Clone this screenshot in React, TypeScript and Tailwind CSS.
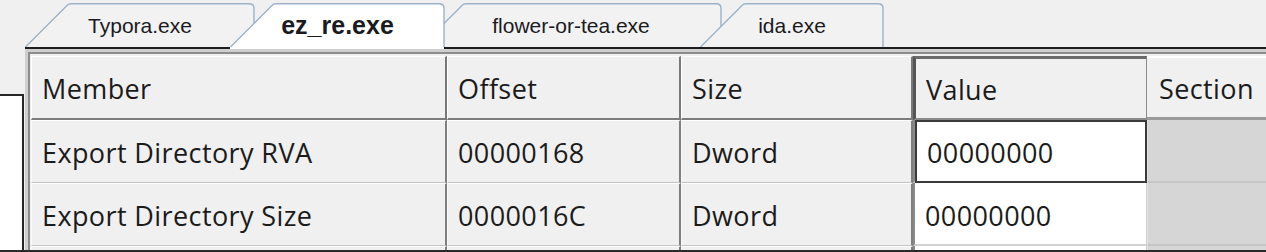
import React from "react";

type Tab = { name: string; w: number; active?: boolean; cls: string };

const TABS: Tab[] = [
  { name: "Typora.exe", w: 230, cls: "z-[1]" },
  { name: "ez_re.exe", w: 215, active: true, cls: "z-10 -ml-[25px]" },
  { name: "flower-or-tea.exe", w: 302, cls: "z-[2] -ml-[25px]" },
  { name: "ida.exe", w: 184, cls: "z-[3] -ml-[22px]" },
];

const COLS = ["Member", "Offset", "Size", "Value", "Section"];

const ROWS = [
  ["Export Directory RVA", "00000168", "Dword", "00000000"],
  ["Export Directory Size", "0000016C", "Dword", "00000000"],
  ["", "", "", ""],
];

function TabShape({ w, active }: { w: number; active?: boolean }) {
  const h = active ? 46 : 44;
  // slanted left edge, rounded top corners
  const d = `M0.5 44 L42 2.5 Q43.5 0.8 46 0.8 H${w - 6} Q${w - 1} 0.8 ${w - 1} 5 V44`;
  return (
    <svg width={w} height={h} className="absolute left-0 top-0" aria-hidden>
      <path d={`${d} Z`} fill={active ? "#ffffff" : "#f2f2f2"} stroke="none" />
      {active && <rect x="0" y="43" width={w - 1} height="3" fill="#ffffff" />}
      <path d={d} fill="none" stroke="#9db2c9" strokeWidth="1.4" />
    </svg>
  );
}

function HeaderCell({ label, idx }: { label: string; idx: number }) {
  const base =
    "flex h-[64px] items-center pl-[10px] pt-[4px] text-[27px] tracking-[0.4px] text-[#1b1b1b] overflow-hidden whitespace-nowrap";
  if (idx === 3) {
    return (
      <div
        className={`${base} border-l-[3px] border-t-[3px] border-b-2 border-r border-l-[#555] border-t-[#6a6a6a] border-b-[#8a8a8a] border-r-[#8a8a8a] bg-[#f0f0f0] pl-[8px]`}
      >
        {label}
      </div>
    );
  }
  if (idx === 4) {
    return (
      <div className={`${base} border-t-2 border-b-[3px] border-t-white border-b-[#9a9a9a] bg-[#f0f0f0] pl-[12px]`}>
        {label}
      </div>
    );
  }
  return (
    <div
      className={`${base} border-l border-t border-r-2 border-b-2 border-l-white border-t-white border-r-[#787878] border-b-[#7c7c7c] bg-[#f0f0f0]`}
    >
      {label}
    </div>
  );
}

function DataCell({ text, col, row }: { text: string; col: number; row: number }) {
  const base =
    "flex h-[63px] items-center pl-[10px] pt-[3px] text-[27px] tracking-[0.4px] text-[#1b1b1b] overflow-hidden whitespace-nowrap";
  if (col === 3) {
    return (
      <div className="h-[63px] border-b-2 border-l-2 border-b-[#d2d2d2] border-l-[#8a8a8a] bg-white">
        <div
          className={`${base} h-[61px] ${
            row === 0 ? "border-2 border-[#3a3a3a] pl-[8px]" : "border-r border-r-[#d0d0d0]"
          }`}
        >
          {text}
        </div>
      </div>
    );
  }
  if (col === 4) {
    return <div className="h-[63px] border-b-2 border-l border-b-[#c6c6c6] border-l-[#e2e2e2] bg-[#d6d6d6]" />;
  }
  return (
    <div
      className={`${base} border-t border-l border-r-2 border-b border-t-white border-l-[#fafafa] border-r-[#7e7e7e] border-b-[#c4c4c4] bg-[#f0f0f0]`}
    >
      {text}
    </div>
  );
}

export default function App() {
  return (
    <div
      className="flex h-[252px] w-[1266px] flex-col overflow-hidden bg-[#f0f0f0]"
      style={{ fontFamily: '"Open Sans", "Noto Sans", sans-serif' }}
    >
      {/* tab strip */}
      <div className="ml-[25px] flex h-[49px] shrink-0 items-end border-b-2 border-[#1e1e1e]">
        {TABS.map((t) => (
          <div
            key={t.name}
            className={`relative flex shrink-0 items-center justify-center ${t.cls} ${
              t.active ? "-mb-[2px] h-[46px] pb-[2px]" : "h-[44px]"
            }`}
            style={{ width: t.w }}
          >
            <TabShape w={t.w} active={t.active} />
            <span
              className={`relative pt-[1px] text-[#1a1a22] ${
                t.active ? "text-[25px] font-bold" : "text-[21px]"
              }`}
              style={{ fontFamily: '"Liberation Sans", Arial, sans-serif' }}
            >
              {t.name}
            </span>
          </div>
        ))}
      </div>

      {/* body */}
      <div className="flex min-h-0 flex-1">
        <div className="w-[25px] shrink-0 pt-[45px]">
          <div className="h-full w-[24px] border-r-2 border-t-2 border-[#262626] bg-white" />
        </div>
        <div className="min-w-0 flex-1 border-l-[3px] border-t-[3px] border-[#cfcfcf]">
          <div className="h-full overflow-hidden border-l-2 border-t-2 border-[#8c8c8c] pl-px pt-[2px]">
            <div className="grid grid-cols-[416px_234px_232px_234px_200px]">
              {COLS.map((c, i) => (
                <HeaderCell key={c} label={c} idx={i} />
              ))}
              {ROWS.map((r, ri) =>
                [...r, ""].map((v, ci) => <DataCell key={`${ri}-${ci}`} text={v} col={ci} row={ri} />)
              )}
            </div>
          </div>
        </div>
      </div>
      <div className="h-[2px] shrink-0 bg-[#2a2a2a]" />
    </div>
  );
}
